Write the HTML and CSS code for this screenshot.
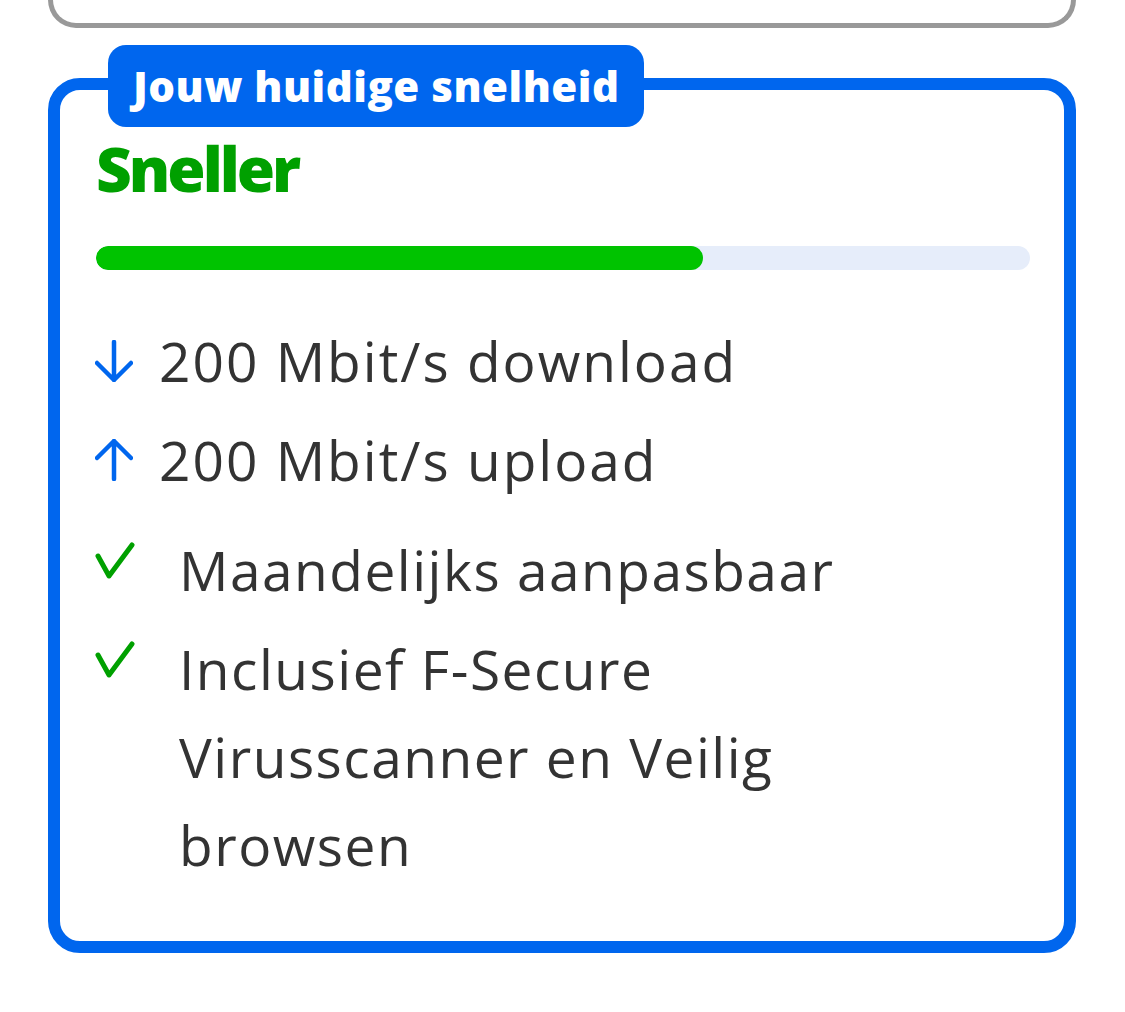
FILE: index.html
```html
<!DOCTYPE html>
<html lang="nl">
<head>
<meta charset="utf-8">
<title>Jouw huidige snelheid</title>
<link rel="stylesheet" href="styles.css">
</head>
<body>
<div class="page">
  <div class="prev-card"></div>
  <section class="speed-card">
    <div class="badge">Jouw huidige snelheid</div>
    <h2 class="title">Sneller</h2>
    <div class="bar"><div class="bar-fill" style="width:65%"></div></div>
    <ul class="speeds">
      <li class="speed">
        <svg class="icon" viewBox="0 0 38 42"><path d="M19 2 V40 M2 23 L19 40 L36 23" fill="none" stroke="#0066ee" stroke-width="4.5" stroke-linecap="round" stroke-linejoin="round"/></svg>
        <span>200 Mbit/s download</span>
      </li>
      <li class="speed">
        <svg class="icon" viewBox="0 0 38 42"><path d="M19 40 V2 M2 19 L19 2 L36 19" fill="none" stroke="#0066ee" stroke-width="4.5" stroke-linecap="round" stroke-linejoin="round"/></svg>
        <span>200 Mbit/s upload</span>
      </li>
    </ul>
    <ul class="features">
      <li class="feature">
        <svg class="check" viewBox="0 0 40 38"><path d="M3 14 L14 34 L37 3" fill="none" stroke="#00a000" stroke-width="5" stroke-linecap="round" stroke-linejoin="round"/></svg>
        <span>Maandelijks aanpasbaar</span>
      </li>
      <li class="feature">
        <svg class="check" viewBox="0 0 40 38"><path d="M3 14 L14 34 L37 3" fill="none" stroke="#00a000" stroke-width="5" stroke-linecap="round" stroke-linejoin="round"/></svg>
        <span>Inclusief F-Secure Virusscanner en Veilig browsen</span>
      </li>
    </ul>
  </section>
</div>
</body>
</html>
```

FILE: styles.css
```css
html, body {
  margin: 0;
  padding: 0;
  background: #ffffff;
}
body {
  font-family: "Open Sans", Lato, sans-serif;
  color: #333333;
}
.page {
  padding: 0 49px 0 48px;
  width: 1028px;
}
.prev-card {
  height: 23px;
  border: 5px solid #999999;
  border-top: none;
  border-radius: 0 0 30px 30px;
}
.speed-card {
  position: relative;
  margin-top: 50px;
  border: 12px solid #0066ee;
  border-radius: 32px;
  padding: 43px 34px 52px 36px;
}
.badge {
  position: absolute;
  top: -45px;
  left: 48px;
  height: 82px;
  box-sizing: border-box;
  padding: 0 25px;
  background: #0066ee;
  color: #ffffff;
  border-radius: 18px;
  font-weight: 800;
  font-size: 42px;
  letter-spacing: 0.5px;
  line-height: 82px;
  white-space: nowrap;
}
.title {
  margin: 0;
  color: #00a000;
  font-weight: 800;
  font-size: 62px;
  letter-spacing: -3px;
  line-height: 70px;
}
.bar {
  margin-top: 43px;
  height: 24px;
  border-radius: 12px;
  background: #e6edfa;
  overflow: hidden;
}
.bar-fill {
  height: 100%;
  background: #00c300;
  border-radius: 12px;
}
.speeds, .features {
  list-style: none;
  margin: 0;
  padding: 0;
}
.speeds {
  margin-top: 41px;
}
.speed {
  display: flex;
  align-items: center;
  gap: 26px;
  font-size: 55px;
  letter-spacing: 2px;
  line-height: 99px;
  margin-left: -1px;
}
.icon {
  width: 38px;
  height: 42px;
  flex: none;
}
.features {
  margin-top: 17px;
}
.feature {
  display: flex;
  align-items: flex-start;
  gap: 44px;
  font-size: 55px;
  letter-spacing: 1.5px;
  line-height: 88px;
  margin-left: -1px;
  margin-bottom: 11px;
  padding-right: 180px;
}
.feature:last-child {
  margin-bottom: 0;
}
.check {
  width: 40px;
  height: 38px;
  flex: none;
  margin-top: 16px;
}
```
